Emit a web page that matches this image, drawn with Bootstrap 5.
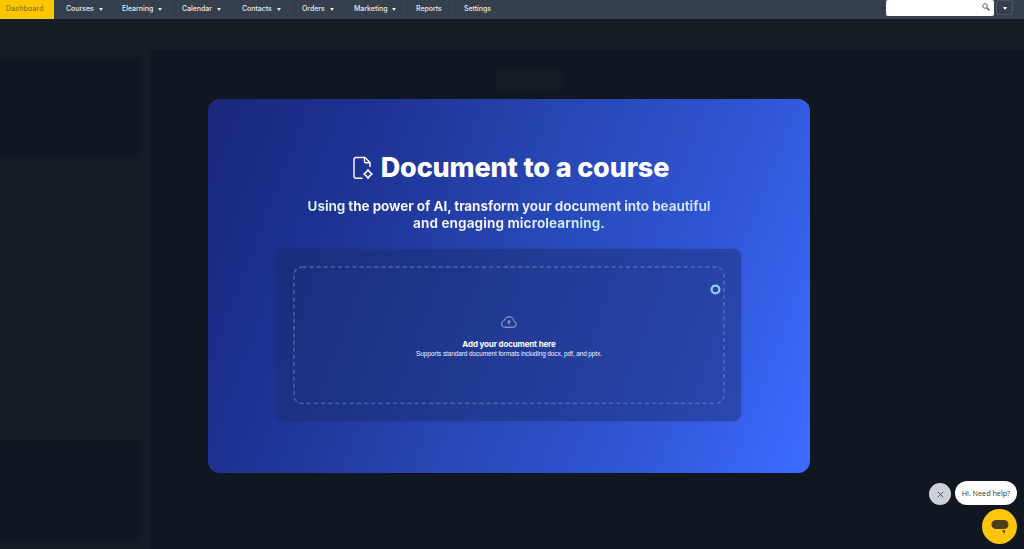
<!DOCTYPE html>
<html lang="en">
<head>
<meta charset="utf-8">
<meta name="viewport" content="width=device-width, initial-scale=1">
<title>Document to a course</title>
<link href="https://cdn.jsdelivr.net/npm/bootstrap@5.3.0/dist/css/bootstrap.min.css" rel="stylesheet">
<style>
  html, body { height: 100%; }
  body { background: #101721; font-family: Inter, "Open Sans", sans-serif; color: #fff; overflow: hidden; }
  .topbar { height: 19px; background: #353f4d; font-size: 7px; line-height: 17px; }
  .topbar .nav-link { padding: 0 0 2px 12px; color: #e6e9ee; height: 19px; border-right: 1px solid #3d4552; font-weight: 500; white-space: nowrap; display: flex; align-items: center; gap: 5px; letter-spacing: -.03px; }
  .topbar .nav-link.plain-edge { border-right-color: transparent; }
  .topbar .nav-link.active { background: #fdc600; color: #7a6413; padding-left: 6px; border: 0; font-weight: 400; letter-spacing: .17px; }
  .w-dash { width: 54px; } .w-cou { width: 56px; } .w-ele { width: 60px; } .w-cal { width: 60px; }
  .w-con { width: 60px; } .w-ord { width: 52px; } .w-mar { width: 62px; } .w-rep { width: 48px; } .w-set { width: 60px; }
  .arrow { border: 2.5px solid transparent; border-top: 3px solid currentColor; border-bottom: 0; margin-top: 1px; }
  .searchbox { width: 108px; height: 16px; background: #fff; border-radius: 2px; padding: 0 4px 2px 0; }
  .more { width: 17px; height: 15px; border: 1px solid #4b5563; border-radius: 3px; margin: 0 11px 0 2px; }
  .backdrop-head { height: 31px; background: #151c24; }
  .side { width: 149px; background: #141c24; }
  .shade { width: 140px; background: #101722; border-radius: 0 6px 6px 0; filter: blur(2px); }
  .shade-a { height: 100px; margin-top: 8px; } .shade-b { height: 102px; margin-bottom: 7px; }
  .stage { padding: 17px 0 0 59px; }
  .ghost { width: 68px; height: 24px; margin: 0 0 8px 287px; background: #131b23; border-radius: 5px; filter: blur(1px); }
  .panel { width: 602px; height: 374px; border-radius: 12px; padding-top: 55px;
    background: linear-gradient(111deg, #19267b 0%, #1e3293 23%, #2746b2 48%, #3056d6 75%, #3c6aff 98%); }
  .title { font-size: 27px; line-height: 28px; font-weight: 800; letter-spacing: -.15px; margin: 0; white-space: nowrap; }
  .lede { font-size: 13.5px; line-height: 17px; font-weight: 700; letter-spacing: -.08px; margin: 16px 0 0; white-space: nowrap; text-align: center; }
  .lede span { background: linear-gradient(90deg, #c5eef3 0, #fff 14%, #f8f6ff 45%, #c7e0fa 100%); -webkit-background-clip: text; background-clip: text; color: transparent; }
  .lede .second { background-image: linear-gradient(90deg, #f3f3ff, #f2f3ff 50%, #b6e9f1 100%); letter-spacing: .1px; }
  .dropwrap { width: 464px; height: 172px; margin-top: 17px; background: rgba(27,42,104,.45); border-radius: 8px; padding: 17px 16px; box-shadow: 0 0 3px rgba(27,42,104,.25); }
  .dropzone { width: 432px; height: 138px; padding-top: 4px; }
  .outline { inset: 0; }
  .addtext { font-size: 8px; line-height: 10px; font-weight: 700; margin-top: 11px; letter-spacing: -.15px; }
  .hint { font: 6.5px/9px "Liberation Sans", Arial, sans-serif; color: #eef1ff; letter-spacing: -.11px; }
  .ring { right: 4px; top: 18px; }
  .helper { right: 7px; bottom: 5px; }
  .closebtn { width: 22px; height: 22px; background: #cdd0d6; margin-top: 2px; }
  .bubble { width: 62px; height: 24px; background: #fff; color: #333; font: 7.3px/24px "Open Sans", sans-serif; border-radius: 12px; text-align: center; white-space: nowrap; letter-spacing: -.05px; }
  .chat { width: 35px; height: 35px; background: #fdc60b; }
</style>
</head>
<body class="d-flex flex-column">
<nav class="topbar d-flex align-items-start flex-shrink-0">
  <div class="nav flex-nowrap flex-grow-1">
    <a class="nav-link active w-dash" href="#"><span>Dashboard</span></a>
    <a class="nav-link plain-edge w-cou" href="#"><span>Courses</span><i class="arrow"></i></a>
    <a class="nav-link w-ele" href="#"><span>Elearning</span><i class="arrow"></i></a>
    <a class="nav-link w-cal" href="#"><span>Calendar</span><i class="arrow"></i></a>
    <a class="nav-link w-con" href="#"><span>Contacts</span><i class="arrow"></i></a>
    <a class="nav-link w-ord" href="#"><span>Orders</span><i class="arrow"></i></a>
    <a class="nav-link w-mar" href="#"><span>Marketing</span><i class="arrow"></i></a>
    <a class="nav-link w-rep" href="#"><span>Reports</span></a>
    <a class="nav-link plain-edge w-set" href="#"><span>Settings</span></a>
  </div>
  <div class="searchbox d-flex align-items-center justify-content-end">
    <svg width="8" height="8" viewBox="0 0 8 8" fill="none" stroke="#555"><circle cx="3" cy="3" r="2.3" stroke-width=".9"/><path d="M4.8 4.8 7.5 7.5" stroke-width="1.3"/></svg>
  </div>
  <div class="more d-flex align-items-center justify-content-center"><i class="arrow"></i></div>
</nav>
<div class="backdrop-head flex-shrink-0"></div>
<div class="d-flex flex-grow-1">
  <aside class="side d-flex flex-column justify-content-between">
    <div class="shade shade-a"></div>
    <div class="shade shade-b"></div>
  </aside>
  <main class="stage">
    <div class="ghost"></div>
    <section class="panel d-flex flex-column align-items-center">
      <div class="d-flex align-items-center ms-1">
        <svg class="me-2" width="20" height="24" viewBox="0 0 20 24" fill="none" stroke="#fff" stroke-width="1.4" stroke-linejoin="round"><path d="M9.5 22.3H3A2 2 0 0 1 1 20.3V3.5A2 2 0 0 1 3 1.5H12L17 6.5V11"/><path d="M11.5 1.5V5.5A1.3 1.3 0 0 0 12.8 6.8H17"/><path stroke-width="1.6" d="M15 13.8 16.8 16.2 19 18 16.8 19.8 15 22.2 13.2 19.8 11 18 13.2 16.2Z"/></svg>
        <h1 class="title">Document to a course</h1>
      </div>
      <p class="lede"><span>Using the power of AI, transform your document into beautiful</span><br><span class="second">and engaging microlearning.</span></p>
      <div class="dropwrap">
        <div class="dropzone position-relative d-flex flex-column align-items-center justify-content-center">
          <svg class="outline position-absolute" width="432" height="138" fill="none"><rect x="1" y="1" width="430" height="136.5" rx="8" stroke="#a9b8ea" stroke-opacity=".36" stroke-width="1.4" stroke-dasharray="4.2 3"/></svg>
          <svg width="16" height="12" viewBox="0 0 16 12" fill="none" stroke="#a9b3da" stroke-width="1"><path d="M4 11.2H12.2A3 3 0 0 0 13 5.3C12.7 2.6 10.6.8 8 .8C5.7.8 4 2.2 3.4 4.6C1.7 4.8.7 6.2.7 7.9C.7 9.8 2.1 11.2 4 11.2Z"/><path d="M8 8.5V4.6M6.4 6.1 8 4.6 9.6 6.1"/></svg>
          <div class="addtext">Add your document here</div>
          <div class="hint">Supports standard document formats including docx, pdf, and pptx.</div>
          <svg class="ring position-absolute" width="11" height="11" viewBox="0 0 11 11" fill="none"><circle cx="5.5" cy="5.5" r="3.9" stroke="#8fd0f0" stroke-width="2.3"/></svg>
        </div>
      </div>
    </section>
  </main>
</div>
<div class="helper position-fixed d-flex flex-column align-items-end">
  <div class="d-flex align-items-center gap-1 mb-1">
    <span class="closebtn rounded-circle d-flex align-items-center justify-content-center"><svg width="7" height="7" viewBox="0 0 7 7" stroke="#444" stroke-width=".9"><path d="M.8.8 6.2 6.2M6.2.8.8 6.2"/></svg></span>
    <span class="bubble">Hi. Need help?</span>
  </div>
  <span class="chat rounded-circle d-flex align-items-center justify-content-center"><svg width="18" height="14" viewBox="0 0 18 14" fill="#4d421d"><rect x=".5" y="0" width="17" height="9" rx="4.5"/><path d="M11 10.3H14V13.5Q12 12.8 11 10.3Z"/></svg></span>
</div>
<script src="https://cdn.jsdelivr.net/npm/bootstrap@5.3.0/dist/js/bootstrap.bundle.min.js"></script>
</body>
</html>
